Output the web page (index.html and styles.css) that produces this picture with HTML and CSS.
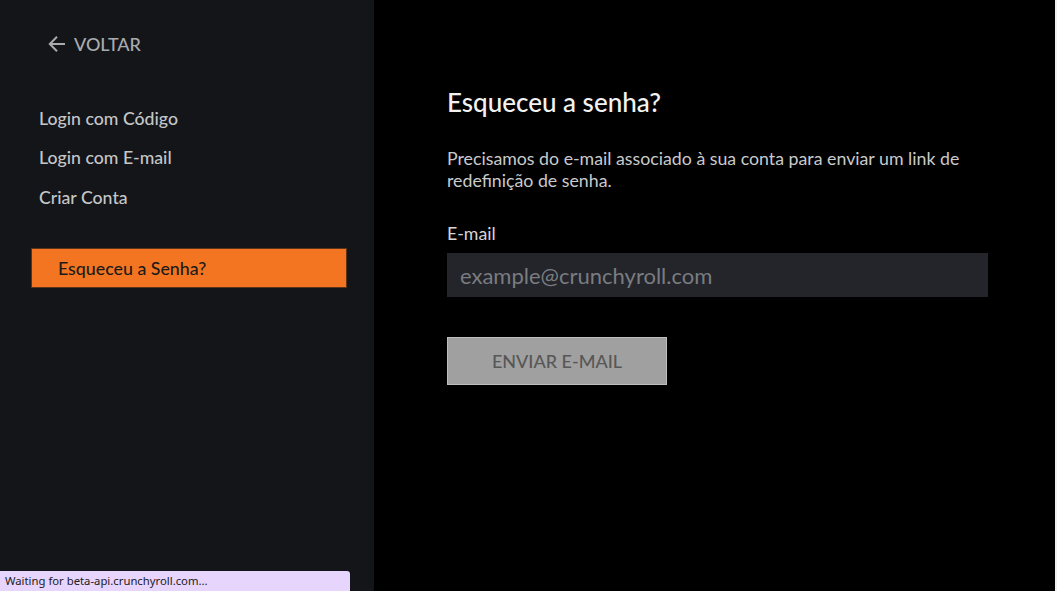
FILE: index.html
```html
<!DOCTYPE html>
<html lang="pt-BR">
<head>
<meta charset="utf-8">
<title>Esqueceu a senha?</title>
<link rel="stylesheet" href="styles.css">
</head>
<body>
<div class="page">
  <aside class="sidebar">
    <a class="back" href="#">
      <svg class="back-icon" width="20" height="20" viewBox="0 0 20 20" aria-hidden="true">
        <path d="M18 10H3M10 2.8L2.8 10L10 17.2" fill="none" stroke="currentColor" stroke-width="2"/>
      </svg>
      <span>VOLTAR</span>
    </a>
    <nav class="menu">
      <a class="menu-item" href="#">Login com Código</a>
      <a class="menu-item" href="#">Login com E-mail</a>
      <a class="menu-item" href="#">Criar Conta</a>
    </nav>
    <div class="active-item">Esqueceu a Senha?</div>
  </aside>
  <main class="main">
    <div class="form">
      <h1 class="title">Esqueceu a senha?</h1>
      <p class="desc">Precisamos do e-mail associado à sua conta para enviar um link de redefinição de senha.</p>
      <label class="label" for="email">E-mail</label>
      <input class="input" id="email" type="email" placeholder="example@crunchyroll.com">
      <button class="submit" type="button">ENVIAR E-MAIL</button>
    </div>
  </main>
  <div class="scrollbar"></div>
</div>
<div class="status">Waiting for beta-api.crunchyroll.com...</div>
</body>
</html>
```
FILE: styles.css
```css
html, body {
  margin: 0;
  padding: 0;
  height: 100%;
  background: #000;
  font-family: Lato, "Noto Sans", sans-serif;
}
.page {
  display: flex;
  height: 100vh;
  overflow: hidden;
}
.sidebar {
  width: 374px;
  flex: none;
  background: #141519;
  padding-top: 32px;
  box-sizing: border-box;
}
.back {
  display: flex;
  align-items: center;
  gap: 7px;
  margin-left: 47px;
  height: 24px;
  color: #a9abae;
  text-decoration: none;
  font-size: 18px;
  font-weight: 500;
}
.back-icon {
  display: block;
}
.menu {
  display: flex;
  flex-direction: column;
  margin-top: 43px;
  padding-left: 39px;
}
.menu-item {
  color: #c4c6c8;
  text-decoration: none;
  font-size: 17.7px;
  font-weight: 500;
  line-height: 24px;
  padding: 7.75px 0;
}
.active-item {
  margin: 30px 0 0 31px;
  width: 316px;
  height: 40px;
  box-sizing: border-box;
  background: #f47521;
  border: 1px solid #5b3419;
  color: #1c1b1a;
  font-size: 17.8px;
  font-weight: 500;
  line-height: 38px;
  padding-left: 26px;
}
.main {
  flex: 1;
  background: #000;
  padding: 87px 0 0 73px;
}
.form {
  width: 541px;
  display: flex;
  flex-direction: column;
  align-items: flex-start;
}
.title {
  margin: 0;
  color: #f2f2f2;
  font-size: 26px;
  font-weight: 500;
  line-height: 30px;
}
.desc {
  margin: 30px 0 0;
  color: #c9cacb;
  font-size: 17.75px;
  line-height: 22px;
}
.label {
  margin-top: 31px;
  color: #d6d6d6;
  font-size: 17.75px;
  line-height: 22px;
}
.input {
  margin-top: 9px;
  width: 541px;
  height: 44px;
  box-sizing: border-box;
  border: none;
  outline: none;
  background: #23252b;
  color: #d0d0d0;
  font-family: inherit;
  font-size: 22px;
  padding: 0 13px;
}
.input::placeholder {
  color: #7a7c80;
}
.submit {
  margin-top: 40px;
  width: 220px;
  height: 48px;
  box-sizing: border-box;
  background: #a0a0a0;
  border: 1px solid #bdbdbd;
  color: #575757;
  font-family: inherit;
  font-size: 18px;
  font-weight: 500;
  padding: 0;
}
.scrollbar {
  width: 2px;
  flex: none;
  background: #f1f1f1;
}
.status {
  position: fixed;
  left: 0;
  bottom: 0;
  width: 350px;
  height: 20px;
  box-sizing: border-box;
  background: #e8d5fd;
  border-top-right-radius: 3px;
  color: #202124;
  font-family: "Noto Sans", "Liberation Sans", sans-serif;
  font-size: 11.3px;
  line-height: 20px;
  padding-left: 5px;
}
```
